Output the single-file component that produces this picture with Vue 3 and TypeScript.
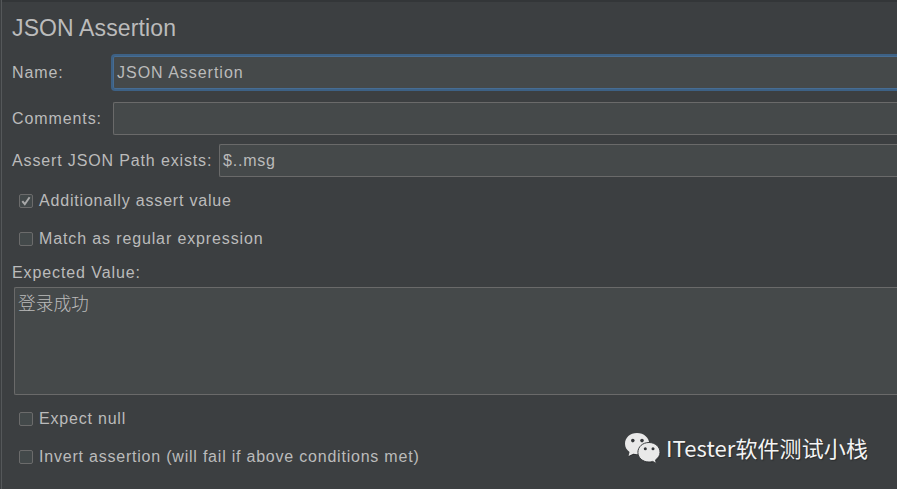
<script setup lang="ts">
import { ref } from 'vue'

interface Option {
  label: string
  checked: boolean
  cls: string
}

const name = ref<string>('JSON Assertion')
const path = ref<string>('$..msg')
const expected = ref<string>('登录成功')
const valueOptions = ref<Option[]>([
  { label: 'Additionally assert value', checked: true, cls: 't-additional' },
  { label: 'Match as regular expression', checked: false, cls: 't-regex' },
])
const resultOptions = ref<Option[]>([
  { label: 'Expect null', checked: false, cls: 't-null' },
  { label: 'Invert assertion (will fail if above conditions met)', checked: false, cls: 't-invert' },
])
</script>

<template>
  <main class="panel">
    <h1 class="title">JSON Assertion</h1>

    <div class="row row-name">
      <span class="label fixed">Name:</span>
      <div class="field focused">{{ name }}</div>
    </div>
    <div class="row row-comments">
      <span class="label fixed">Comments:</span>
      <div class="field"></div>
    </div>
    <div class="row row-path">
      <span class="label wide">Assert JSON Path exists:</span>
      <div class="field">{{ path }}</div>
    </div>

    <div class="options">
      <div v-for="o in valueOptions" :key="o.label" class="option" @click="o.checked = !o.checked">
        <span class="box">
          <svg v-if="o.checked" width="12" height="12" viewBox="0 0 12 12">
            <path d="M2.300 6.200 4.800 9.200 9.600 2.300" fill="none" stroke="#a9a9a9" stroke-width="2" />
          </svg>
        </span>
        <span :class="o.cls">{{ o.label }}</span>
      </div>
    </div>

    <div class="expected-label">Expected Value:</div>
    <div class="area">{{ expected }}</div>

    <div class="options result">
      <div v-for="o in resultOptions" :key="o.label" class="option" @click="o.checked = !o.checked">
        <span class="box"></span>
        <span :class="o.cls">{{ o.label }}</span>
      </div>
    </div>

    <div class="watermark">
      <svg class="wechat" width="38" height="34" viewBox="0 0 38 34">
        <g fill="#292b2d" transform="translate(.6 .8)">
          <path d="M13 1C6 1 1 5.700 1 11.700c0 3.500 1.700 6.300 4.500 8.200L4.600 24l4.700-2.300c1.200.3 2.400.5 3.700.5 7 0 12.300-4.600 12.300-10.500S20 1 13 1Z" />
          <path d="M25 11c-6.200 0-10.900 4.100-10.900 9.500S18.800 30 25 30c1.300 0 2.600-.2 3.700-.6l3.700 1.900-.9-3.400c2.700-1.800 4.300-4.300 4.300-7.400C35.800 15.100 31.200 11 25 11Z" />
        </g>
        <path fill="#e9e9e9" d="M13 1C6 1 1 5.700 1 11.700c0 3.500 1.700 6.300 4.500 8.200L4.600 24l4.700-2.300c1.200.3 2.400.5 3.700.5 7 0 12.300-4.600 12.300-10.500S20 1 13 1Z" />
        <path fill="#e9e9e9" stroke="#3c3f41" stroke-width="1" d="M25 10.500c-6.300 0-11.100 4.300-11.100 9.800S18.700 30 25 30c1.300 0 2.600-.2 3.700-.6l3.700 2-.9-3.500c2.700-1.800 4.500-4.400 4.500-7.600 0-5.500-4.800-9.800-11-9.800Z" />
        <g fill="#34373a">
          <circle cx="8.800" cy="8.600" r="1.800" />
          <circle cx="18" cy="8.600" r="1.800" />
          <circle cx="21.300" cy="16.700" r="1.500" />
          <circle cx="29" cy="16.700" r="1.500" />
        </g>
      </svg>
      <span class="brand">ITester软件测试小栈</span>
    </div>
  </main>
</template>

<style>
body {
  margin: 0;
  background: #3c3f41;
  overflow: hidden;
}
</style>

<style scoped>
.panel {
  position: relative;
  box-sizing: border-box;
  width: 100%;
  height: 489px;
  padding: 11px 0 0 10px;
  border-left: 1px solid #55585a;
  box-shadow: inset 0 2px 0 #333638;
  margin-left: 1px;
  background: #3c3f41;
  color: #bbb;
  font: 16px/20px "Liberation Sans", "Noto Sans CJK SC", sans-serif;
  letter-spacing: 0.9px;
  white-space: nowrap;
  overflow: hidden;
}
.title {
  margin: 0;
  font-size: 23px;
  line-height: 34px;
  font-weight: 400;
  letter-spacing: 0.13px;
}
.row {
  display: flex;
  align-items: center;
}
.row-name {
  margin-top: 9px;
  height: 37px;
}
.row-comments {
  margin-top: 11px;
  height: 33px;
}
.row-path {
  margin-top: 9px;
  height: 33px;
}
.label {
  flex: none;
}
.fixed {
  width: 101px;
}
.wide {
  width: 207px;
  letter-spacing: 0.86px;
}
.field {
  box-sizing: border-box;
  flex: 1;
  height: 33px;
  padding: 0 3px;
  border: 1px solid #6a6a6a;
  border-right: 0;
  border-radius: 2px 0 0 2px;
  background: #45494a;
  line-height: 31px;
  letter-spacing: 0.8px;
}
.focused {
  height: 37px;
  margin-left: -2px;
  padding: 0 4px;
  border: 2px solid #3d6185;
  border-right: 0;
  border-radius: 4px 0 0 4px;
  box-shadow: inset 0 1px #466d94, inset 0 -1px #466d94, inset 1px 0 #466d94;
  line-height: 33px;
  letter-spacing: 0.98px;
}
.options {
  display: flex;
  flex-direction: column;
  gap: 18px;
  margin-top: 14px;
  padding-left: 7px;
}
.option {
  display: flex;
  align-items: center;
  gap: 6px;
  height: 20px;
}
.t-additional {
  letter-spacing: 0.81px;
}
.t-regex {
  letter-spacing: 0.87px;
}
.t-null {
  letter-spacing: 0.8px;
}
.t-invert {
  letter-spacing: 0.785px;
}
.box {
  box-sizing: border-box;
  width: 14px;
  height: 14px;
  border: 1px solid #6b6b6b;
  border-radius: 2px;
  background: #43494a;
}
.box svg {
  display: block;
}
.expected-label {
  margin-top: 14px;
}
.area {
  box-sizing: border-box;
  height: 108px;
  margin: 4px 0 0 2px;
  padding: 3px 3px;
  border: 1px solid #6a6a6a;
  border-right: 0;
  border-radius: 2px 0 0 2px;
  background: #45494a;
  font-size: 17.700px;
  font-weight: 300;
  line-height: 26px;
  letter-spacing: 0;
}
.result {
  margin-top: 14px;
}
.watermark {
  position: absolute;
  left: 622px;
  top: 432px;
  display: flex;
  align-items: flex-start;
  gap: 4px;
  color: #f4f4f4;
  letter-spacing: 0;
}
.brand {
  font: 22px/30px "Noto Sans CJK SC", sans-serif;
  letter-spacing: 0.1px;
  text-shadow: 1px 1px 1px #292b2d;
}
</style>
